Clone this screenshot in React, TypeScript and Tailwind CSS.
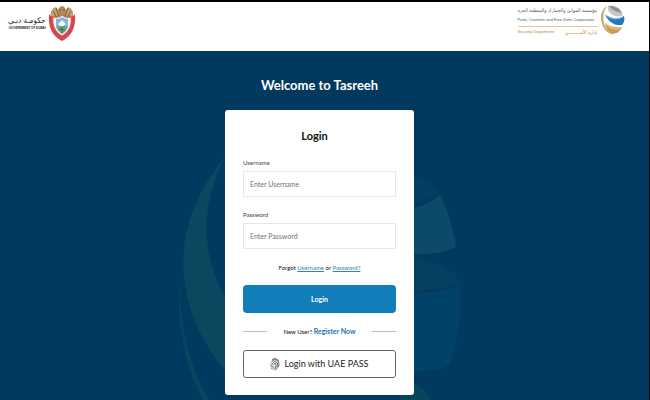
import type { ReactNode } from 'react';

interface FieldProps {
  id: string;
  label: string;
  type?: string;
  placeholder: string;
}

function Field({ id, label, type = 'text', placeholder }: FieldProps) {
  return (
    <div className="flex flex-col gap-1">
      <label htmlFor={id} className="text-[6px] leading-[9px] text-[#444]">
        {label}
      </label>
      <input
        id={id}
        type={type}
        placeholder={placeholder}
        className="h-[26px] w-full border border-[#e4e6e9] bg-white px-1.5 text-[7px] text-[#333] placeholder:text-[#6c757d]"
      />
    </div>
  );
}

function TextLink({ children }: { children: ReactNode }) {
  return (
    <a href="#" className="text-[#3182bd] underline">
      {children}
    </a>
  );
}

function GovernmentLogo() {
  return (
    <div className="flex items-center gap-0.5">
      <div className="flex flex-col items-end text-[#222]">
        <span lang="ar" dir="rtl" className="font-['DejaVu_Sans_Condensed','DejaVu_Sans',sans-serif] text-[8px] leading-[9px]">
          حكومـة دبـي
        </span>
        <span className="font-['Liberation_Sans',sans-serif] text-[3px] leading-[6px] font-bold">GOVERNMENT OF DUBAI</span>
      </div>
      <svg viewBox="0 0 28 36" className="h-9 w-7" aria-hidden="true">
        <path d="M3 12C2 7 4 3 8 2l4 5-1 8zM25 12c1-5-1-9-5-10l-4 5 1 8z" fill="#c4a16c" />
        <path d="M10 6c0-2 2-5 4-5s4 3 4 5l-1 8h-6z" fill="#b18c56" />
        <path d="M5 6l4 7M8 3l3 9M23 6l-4 7M20 3l-3 9" stroke="#7d5f3a" strokeWidth="1" fill="none" />
        <path d="M11 5h2M15 5h2" stroke="#5c4630" />
        <path d="M1 9c2 3 5 3 7 2l-2 5c0 6 3 11 8 14 5-3 8-8 8-14l-2-5c2 1 5 1 7-2 1 13-3 22-13 27C4 31 0 22 1 9z" fill="#d9444a" />
        <path d="M5 12c4 1 7 0 9-2 2 2 5 3 9 2 1 8-2 15-9 19-7-4-10-11-9-19z" fill="#f8eeee" stroke="#c9595c" strokeWidth=".8" />
        <path d="M8 14c3 0 5-1 6-2 1 1 3 2 6 2v7H8z" fill="#79b9df" />
        <path d="M10 19l4-4 4 4-3 2h-3z" fill="#f3f8fb" />
        <path d="M8 21h12c-1 4-3 6-6 8-3-2-5-4-6-8z" fill="#6da487" />
        <path d="M14 22v6M11 24l6 1" stroke="#245d47" strokeWidth=".8" />
      </svg>
    </div>
  );
}

function CorporationLogo() {
  return (
    <div className="flex items-center gap-1">
      <div className="flex flex-col font-['Liberation_Sans',sans-serif] text-[#55565a]">
        <span
          lang="ar"
          dir="rtl"
          className="font-['DejaVu_Sans_Condensed','DejaVu_Sans',sans-serif] text-[5px] leading-[9px] whitespace-nowrap"
        >
          مؤسسة الموانئ والجمارك والمنطقة الحرة
        </span>
        <span className="text-[4px] leading-[9px] whitespace-nowrap">Ports, Customs and Free Zone Corporation</span>
        <div className="mt-0.5 flex justify-between border-t border-[#ddc7a0] pt-0.5 text-[4px] leading-[6px] text-[#b88334]">
          <span>Security Department</span>
          <span lang="ar" dir="rtl" className="font-['DejaVu_Sans_Condensed','DejaVu_Sans',sans-serif] text-[5px]">
            إدارة الأمـــــــــن
          </span>
        </div>
      </div>
      <svg viewBox="0 0 24 30" className="h-[30px] w-6" aria-hidden="true">
        <path d="M6 1C0 9 1 21 10 29 4 27 0 20 0 12 0 7 3 3 6 1z" fill="#c9a76d" />
        <path d="M7 1c7-1 12 1 15 9-3 2-7 2-10 0-4-2-6-5-5-9z" fill="#c5c8ca" />
        <path d="M8 1c3 4 7 6 13 7-3-5-7-7-13-7z" fill="#8c9194" />
        <path d="M4 9c4 5 12 7 19 2 1 4 0 7-2 9-7 1-14-3-17-11z" fill="#2878b6" />
        <path d="M4 9c5 4 12 6 19 2-4 5-13 5-19-2z" fill="#78b2d9" />
        <path d="M4 18c5 4 11 5 17 4-2 5-6 7-10 7-4-2-6-5-7-11z" fill="#c89d55" />
        <path d="M4 18c5 5 11 6 17 4-4 4-13 3-17-4z" fill="#e3c58e" />
      </svg>
    </div>
  );
}

function Backdrop() {
  return (
    <svg
      viewBox="0 0 650 349"
      className="absolute top-0 left-1/2 h-[349px] w-[650px] -translate-x-1/2"
      aria-hidden="true"
    >
      <path d="M225 106C170 171 169 251 225 320L260 320 225 246C203 207 198 158 225 106z" fill="#0d475f" />
      <path d="M179 229C177 279 187 319 203 349L209 349C189 314 181 279 179 229z" fill="#0a455f" />
      <path d="M400 125C420 125 433 131 440 143L400 158z" fill="#043f62" />
      <path d="M440 143C447 157 453 177 456 196 442 203 422 204 400 203V158C417 158 431 153 440 143z" fill="#0c4a68" />
      <path d="M400 206C435 207 459 219 460 234L400 244z" fill="#063f5f" />
      <path d="M460 234C461 263 459 292 449 314 439 320 419 321 400 320V242C425 243 446 241 460 234z" fill="#014368" />
      <path d="M400 325C414 329 425 338 431 349H400z" fill="#09435e" />
    </svg>
  );
}

function FingerprintIcon() {
  return (
    <svg viewBox="0 0 20 26" className="h-[13px] w-2.5" fill="none" strokeWidth="1.8" strokeLinecap="round" aria-hidden="true">
      <path d="M5 3c4-3 9-2 12 2M3 8c3-6 11-6 14 0 1 3 1 6 0 9" stroke="#444" />
      <path d="M2 12c0 2 1 3 0 5M5 12c0-6 9-7 10 0 0 4 0 7-2 10" stroke="#555" />
      <path d="M5 16c0 2-1 3-2 5" stroke="#2ba27a" />
      <path d="M8 13c0-4 4-4 4 0 0 3 0 5-2 8" stroke="#444" />
      <path d="M8 17c0 2-1 4-3 6" stroke="#2ba27a" />
      <path d="M9 24l3-1" stroke="#e05252" />
    </svg>
  );
}

export default function App() {
  return (
    <div className="flex min-h-screen flex-col border-t-2 border-r border-black bg-[#02395f] font-['Lato',sans-serif]">
      <header className="flex h-[49px] items-start justify-between bg-white pt-[3px] pr-6 pl-2">
        <GovernmentLogo />
        <CorporationLogo />
      </header>

      <main className="relative flex flex-1 flex-col items-center overflow-hidden pt-6 pr-2.5 pb-1.5">
        <Backdrop />
        <h1 className="relative text-[13px] leading-5 font-bold text-white">Welcome to Tasreeh</h1>

        <section className="relative mt-[15px] flex w-[189px] flex-col rounded-[3px] bg-white px-[18px] pt-[18px] pb-[17px]">
          <h2 className="pr-2.5 text-center text-[11px] leading-4 font-bold text-[#111]">Login</h2>

          <form className="mt-3.5 flex flex-col" onSubmit={(e) => e.preventDefault()}>
            <div className="flex flex-col gap-[13px]">
              <Field id="username" label="Username" placeholder="Enter Username" />
              <Field id="password" label="Password" type="password" placeholder="Enter Password" />
            </div>
            <p className="mt-3.5 text-center text-[6px] leading-[10px] text-[#111]">
              Forgot <TextLink>Username</TextLink> or <TextLink>Password?</TextLink>
            </p>
            <button type="submit" className="mt-3 h-7 rounded bg-[#117db9] text-[7px] font-bold text-white">
              Login
            </button>
          </form>

          <div className="mt-3 flex items-center justify-between">
            <span className="h-px w-6 bg-[#bbb]" />
            <p className="text-[6px] leading-3 text-[#111]">
              New User?{' '}
              <a href="#" className="text-[7px] font-bold text-[#1a75bb]">Register Now</a>
            </p>
            <span className="h-px w-6 bg-[#bbb]" />
          </div>

          <button
            type="button"
            className="mt-3 flex h-7 items-center justify-center gap-1 rounded-[3px] border border-[#666] text-[9px] text-[#222]"
          >
            <FingerprintIcon />
            Login with UAE PASS
          </button>
        </section>
      </main>
    </div>
  );
}
